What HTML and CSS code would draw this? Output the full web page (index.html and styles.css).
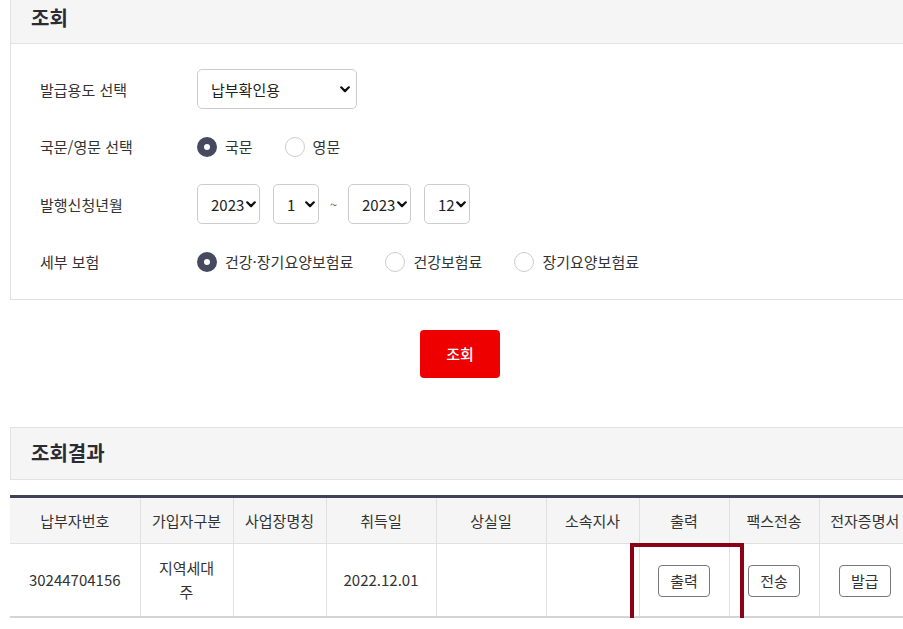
FILE: index.html
```html
<!DOCTYPE html>
<html lang="ko">
<head>
<meta charset="utf-8">
<link rel="stylesheet" href="styles.css">
</head>
<body>
<div class="wrap">
  <section class="panel">
    <h2 class="panel-head">조회</h2>
    <div class="panel-body">
      <div class="row">
        <div class="label">발급용도 선택</div>
        <select class="sel sel-wide"><option>납부확인용</option></select>
      </div>
      <div class="row">
        <div class="label">국문/영문 선택</div>
        <div class="radios">
          <label class="radio"><span class="dot on"></span>국문</label>
          <label class="radio"><span class="dot"></span>영문</label>
        </div>
      </div>
      <div class="row">
        <div class="label">발행신청년월</div>
        <div class="dates">
          <select class="sel sel-year"><option>2023</option></select>
          <select class="sel sel-mon"><option>1</option></select>
          <span class="tilde">~</span>
          <select class="sel sel-year"><option>2023</option></select>
          <select class="sel sel-mon"><option>12</option></select>
        </div>
      </div>
      <div class="row">
        <div class="label">세부 보험</div>
        <div class="radios">
          <label class="radio"><span class="dot on"></span>건강·장기요양보험료</label>
          <label class="radio"><span class="dot"></span>건강보험료</label>
          <label class="radio"><span class="dot"></span>장기요양보험료</label>
        </div>
      </div>
    </div>
  </section>

  <div class="actions"><button class="btn-search">조회</button></div>

  <section class="result-head"><h2>조회결과</h2></section>

  <div class="table-wrap">
    <table class="grid">
      <colgroup>
        <col style="width:130px"><col style="width:93px"><col style="width:93px"><col style="width:110px"><col style="width:110px"><col style="width:93px"><col style="width:90px"><col style="width:90px"><col style="width:91px">
      </colgroup>
      <thead>
        <tr><th>납부자번호</th><th>가입자구분</th><th>사업장명칭</th><th>취득일</th><th>상실일</th><th>소속지사</th><th>출력</th><th>팩스전송</th><th>전자증명서</th></tr>
      </thead>
      <tbody>
        <tr>
          <td>30244704156</td>
          <td class="wrapcell">지역세대주</td>
          <td></td>
          <td>2022.12.01</td>
          <td></td>
          <td></td>
          <td><button class="btn-sm">출력</button></td>
          <td><button class="btn-sm">전송</button></td>
          <td><button class="btn-sm">발급</button></td>
        </tr>
      </tbody>
    </table>
    <div class="highlight"></div>
  </div>
</div>
</body>
</html>
```
FILE: styles.css
```css
html, body {
  margin: 0;
  padding: 0;
  background: #fff;
  overflow: hidden;
}
body {
  font-family: "Noto Sans CJK KR", "Noto Sans", sans-serif;
  font-size: 15px;
  color: #333;
}
.wrap {
  margin-left: 10px;
  width: 900px;
}
.panel {
  border: 1px solid #e2e2e2;
  border-top: none;
}
.panel-head {
  margin: 0;
  height: 44px;
  line-height: 36px;
  padding-left: 20px;
  background: #f5f5f5;
  border-bottom: 1px solid #e2e2e2;
  font-size: 20px;
  font-weight: 700;
  color: #2b2b33;
  box-sizing: border-box;
}
.panel-body {
  padding: 25px 0 17px 29px;
  display: flex;
  flex-direction: column;
  gap: 17.5px;
}
.row {
  display: flex;
  align-items: center;
  height: 40px;
}
.label {
  width: 157px;
  flex: none;
  font-size: 15px;
  color: #333;
}
.sel {
  -webkit-appearance: none;
  appearance: none;
  height: 40px;
  border: 1px solid #ccc;
  border-radius: 5px;
  background-color: #fff;
  background-image: url("data:image/svg+xml,%3Csvg xmlns='http://www.w3.org/2000/svg' width='10' height='7' viewBox='0 0 10 7'%3E%3Cpath d='M1.2 1.3 L5 5.1 L8.8 1.3' fill='none' stroke='%23111' stroke-width='2.2' stroke-linecap='round' stroke-linejoin='round'/%3E%3C/svg%3E");
  background-repeat: no-repeat;
  background-size: 10px 7px;
  background-position: right 3px center;
  font-family: "Noto Sans CJK KR", "Noto Sans", sans-serif;
  font-size: 15px;
  color: #222;
  padding: 0 0 0 13px;
  box-sizing: border-box;
}
.sel-wide { width: 160px; background-position: right 6px center; }
.sel-year { width: 63px; }
.sel-mon { width: 46px; padding-left: 13px; }
.dates {
  display: flex;
  align-items: center;
  gap: 13px;
}
.tilde {
  font-size: 13px;
  color: #666;
  width: 3px;
  display: flex;
  justify-content: center;
}
.radios {
  display: flex;
  align-items: center;
  gap: 32px;
}
.radio {
  display: flex;
  align-items: center;
  gap: 8px;
  font-size: 15px;
  color: #333;
}
.dot {
  width: 20px;
  height: 20px;
  border-radius: 50%;
  border: 1px solid #ccc;
  box-sizing: border-box;
  background: #fff;
}
.dot.on {
  border: 7px solid #464960;
}
.actions {
  display: flex;
  justify-content: center;
  padding: 30px 0 49px;
}
.btn-search {
  width: 80px;
  height: 48px;
  background: #ee0000;
  color: #fff;
  border: none;
  border-radius: 4px;
  font-family: "Noto Sans CJK KR", "Noto Sans", sans-serif;
  font-size: 15px;
  font-weight: 500;
}
.result-head {
  border: 1px solid #e2e2e2;
  background: #f5f5f5;
  height: 53px;
  box-sizing: border-box;
  padding-left: 20px;
}
.result-head h2 {
  margin: 0;
  font-size: 20px;
  font-weight: 700;
  line-height: 49px;
  color: #2b2b33;
}
.table-wrap {
  position: relative;
  margin-top: 15px;
}
.grid {
  border-collapse: collapse;
  table-layout: fixed;
  width: 900px;
  border-top: 3px solid #3f4156;
  border-bottom: 2px solid #d4d4d4;
}
.grid th {
  height: 45px;
  background: #f5f5f5;
  font-weight: 400;
  font-size: 15px;
  color: #333;
  border-left: 1px solid #e0e0e0;
  border-bottom: 1px solid #e0e0e0;
  padding: 0;
}
.grid td {
  height: 72px;
  text-align: center;
  border-left: 1px solid #e0e0e0;
  font-size: 15px;
  color: #333;
  line-height: 24px;
  padding: 0;
}
.grid th:first-child, .grid td:first-child { border-left: none; }
.grid td.wrapcell { padding: 0 14px; }
.btn-sm {
  width: 52px;
  height: 32px;
  background: #fff;
  border: 1px solid #777;
  border-radius: 4px;
  font-family: "Noto Sans CJK KR", "Noto Sans", sans-serif;
  font-size: 15px;
  color: #333;
  padding: 0;
  margin-top: 2px;
}
.highlight {
  position: absolute;
  left: 620px;
  top: 48px;
  width: 114px;
  height: 79px;
  border: 4px solid #8b0016;
  box-sizing: border-box;
}
```
